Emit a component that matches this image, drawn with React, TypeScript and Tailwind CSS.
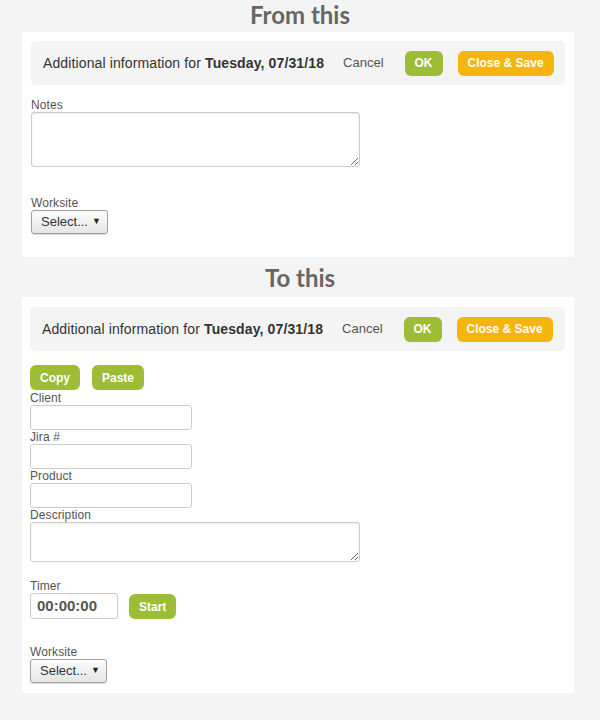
import React from "react";

const font = { fontFamily: '"Liberation Sans", Arial, sans-serif' };

function Btn({ children, color }: { children: React.ReactNode; color: "green" | "orange" }) {
  return (
    <button
      className={
        "h-[25px] px-[10px] rounded-[6px] text-white font-bold text-[12px] leading-none flex items-center " +
        (color === "green" ? "bg-[#9dbd37]" : "bg-[#f5b50c]")
      }
    >
      {children}
    </button>
  );
}

function Header() {
  return (
    <div className="h-[44px] bg-[#f4f4f4] rounded-[5px] flex items-center pl-[12px] text-[14px] text-[#333]">
      <span className="tracking-[0.12px]">
        Additional information for <b>Tuesday, 07/31/18</b>
      </span>
      <span className="ml-[19px] text-[13px] text-[#555]">Cancel</span>
      <span className="ml-[21px]">
        <Btn color="green">OK</Btn>
      </span>
      <span className="ml-[15px]">
        <Btn color="orange">Close &amp; Save</Btn>
      </span>
    </div>
  );
}

function Label({ children }: { children: React.ReactNode }) {
  return <div className="text-[12px] leading-[14px] text-[#555] tracking-[0.1px]">{children}</div>;
}

function SelectBox() {
  return (
    <div className="w-[77px] h-[24px] border border-[#a0a0a0] rounded-[3px] bg-gradient-to-b from-[#fdfdfd] to-[#e6e6e6] flex items-center pl-[9px] pr-[6px] justify-between text-[13px] text-[#333] shadow-[0_1px_1px_rgba(0,0,0,0.15)]">
      <span>Select...</span>
      <span className="text-[9px] text-[#222]">▼</span>
    </div>
  );
}

function Title({ children, h }: { children: React.ReactNode; h: string }) {
  return (
    <div
      className={"flex justify-center items-center text-[24px] font-bold text-[#666] " + h}
      style={{ fontFamily: 'Lato, "Open Sans", sans-serif' }}
    >
      {children}
    </div>
  );
}

export default function App() {
  return (
    <div className="min-h-[720px] w-[600px] bg-[#f4f4f4]" style={font}>
      <Title h="h-[32px] pb-[2px]">From this</Title>
      <div className="ml-[22px] w-[552px] bg-white pt-[9px] px-[9px] pb-[23px]">
        <Header />
        <div className="mt-[13px]">
          <Label>Notes</Label>
          <textarea className="block w-[329px] h-[55px] border border-[#ccc] rounded-[3px] shadow-[inset_0_1px_2px_rgba(0,0,0,0.08)] outline-none" />
        </div>
        <div className="mt-[29px]">
          <Label>Worksite</Label>
          <SelectBox />
        </div>
      </div>
      <Title h="h-[40px] pt-[2px]">To this</Title>
      <div className="ml-[22px] w-[552px] bg-white pt-[10px] pl-[8px] pr-[9px] pb-[10px]">
        <Header />
        <div className="mt-[14px] flex gap-[12px]">
          <Btn color="green">Copy</Btn>
          <Btn color="green">Paste</Btn>
        </div>
        <div className="mt-[1px]">
          <Label>Client</Label>
          <input className="block w-[162px] h-[25px] border border-[#ccc] rounded-[3px] outline-none" />
          <Label>Jira #</Label>
          <input className="block w-[162px] h-[25px] border border-[#ccc] rounded-[3px] outline-none" />
          <Label>Product</Label>
          <input className="block w-[162px] h-[25px] border border-[#ccc] rounded-[3px] outline-none" />
          <Label>Description</Label>
          <textarea className="block w-[330px] h-[40px] border border-[#ccc] rounded-[3px] shadow-[inset_0_1px_2px_rgba(0,0,0,0.08)] outline-none" />
        </div>
        <div className="mt-[17px]">
          <Label>Timer</Label>
          <div className="flex items-start">
            <div className="w-[88px] h-[26px] border border-[#ccc] rounded-[3px] flex items-center pl-[6px] text-[15px] font-bold text-[#555]">
              00:00:00
            </div>
            <span className="ml-[11px] mt-[1px]">
              <Btn color="green">Start</Btn>
            </span>
          </div>
        </div>
        <div className="mt-[26px]">
          <Label>Worksite</Label>
          <SelectBox />
        </div>
      </div>
    </div>
  );
}
